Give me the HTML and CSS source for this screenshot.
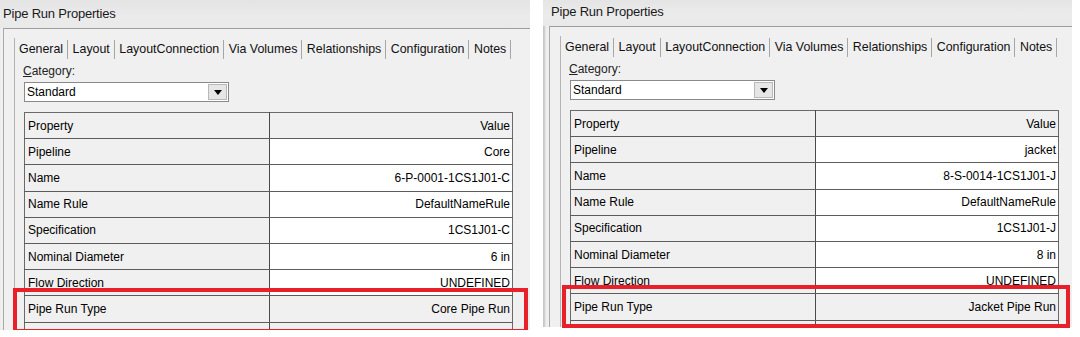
FILE: index.html
```html
<!DOCTYPE html>
<html lang="en">
<head>
    <meta charset="UTF-8">
    <title>Pipe Run Properties</title>
    <link rel="stylesheet" href="styles.css">
</head>
<body>

<div class="shots">

    <section class="shot shot-left">
        <div class="dialog">
            <div class="titlebar">Pipe Run Properties</div>
            <div class="frame">
                <div class="tabctl">
                    <ul class="tabs">
                        <li class="active">General</li>
                        <li>Layout</li>
                        <li>LayoutConnection</li>
                        <li>Via Volumes</li>
                        <li>Relationships</li>
                        <li>Configuration</li>
                        <li>Notes</li>
                    </ul>
                    <div class="page">
                        <div class="field-label"><u>C</u>ategory:</div>
                        <div class="combo">
                            <span class="combo-text">Standard</span>
                            <span class="combo-btn"><svg width="8" height="5" viewBox="0 0 8 5"><path d="M0 0h8L4 5z" fill="#000"/></svg></span>
                        </div>
                        <table class="grid">
                            <tr class="head"><td>Property</td><td>Value</td></tr>
                            <tr><td>Pipeline</td><td class="edit">Core</td></tr>
                            <tr><td>Name</td><td class="edit">6-P-0001-1CS1J01-C</td></tr>
                            <tr><td>Name Rule</td><td class="edit">DefaultNameRule</td></tr>
                            <tr><td>Specification</td><td class="edit">1CS1J01-C</td></tr>
                            <tr><td>Nominal Diameter</td><td class="edit">6 in</td></tr>
                            <tr><td>Flow Direction</td><td class="edit">UNDEFINED</td></tr>
                            <tr><td>Pipe Run Type</td><td>Core Pipe Run</td></tr>
                            <tr><td></td><td></td></tr>
                        </table>
                    </div>
                </div>
            </div>
        </div>
        <div class="mark"></div>
    </section>

    <section class="shot shot-right">
        <div class="dialog">
            <div class="titlebar">Pipe Run Properties</div>
            <div class="frame">
                <div class="tabctl">
                    <ul class="tabs">
                        <li class="active">General</li>
                        <li>Layout</li>
                        <li>LayoutConnection</li>
                        <li>Via Volumes</li>
                        <li>Relationships</li>
                        <li>Configuration</li>
                        <li>Notes</li>
                    </ul>
                    <div class="page">
                        <div class="field-label"><u>C</u>ategory:</div>
                        <div class="combo">
                            <span class="combo-text">Standard</span>
                            <span class="combo-btn"><svg width="8" height="5" viewBox="0 0 8 5"><path d="M0 0h8L4 5z" fill="#000"/></svg></span>
                        </div>
                        <table class="grid">
                            <tr class="head"><td>Property</td><td>Value</td></tr>
                            <tr><td>Pipeline</td><td class="edit">jacket</td></tr>
                            <tr><td>Name</td><td class="edit">8-S-0014-1CS1J01-J</td></tr>
                            <tr><td>Name Rule</td><td class="edit">DefaultNameRule</td></tr>
                            <tr><td>Specification</td><td class="edit">1CS1J01-J</td></tr>
                            <tr><td>Nominal Diameter</td><td class="edit">8 in</td></tr>
                            <tr><td>Flow Direction</td><td class="edit">UNDEFINED</td></tr>
                            <tr><td>Pipe Run Type</td><td>Jacket Pipe Run</td></tr>
                            <tr><td></td><td></td></tr>
                        </table>
                    </div>
                </div>
            </div>
        </div>
        <div class="mark"></div>
    </section>

</div>

</body>
</html>
```

FILE: styles.css
```css
body {
    margin: 0;
    background: #fff;
    font-family: "Liberation Sans", Arial, sans-serif;
    font-size: 12px;
    color: #000;
    overflow: hidden;
}

.shots {
    display: flex;
    align-items: flex-start;
}

.shot {
    position: relative;
    flex: none;
}

.shot-left {
    width: 533px;
    margin-left: -3px;
}

.shot-right {
    width: 529px;
    margin-left: 13px;
    margin-top: -2px;
}

.dialog {
    height: 330px;
    overflow: hidden;
    background: #f0f0f0;
    box-shadow: inset 3px 0 2px -1px #c4c4c4;
}

.shot-right .dialog {
    height: 329px;
}

/* barre de titre */
.titlebar {
    height: 28px;
    line-height: 27px;
    padding-left: 6px;
    font-size: 13px;
    letter-spacing: -0.2px;
    color: #1a1a1a;
    background: linear-gradient(to bottom, #e4e4e4, #ebebeb 60%, #e9e9e9);
}

.shot-right .titlebar {
    padding-left: 8px;
}

.frame {
    margin-left: 6px;
    height: 302px;
    border-top: 1px solid #9e9e9e;
    border-left: 1px solid #a9a9a9;
    background: #f0f0f0;
}

.tabctl {
    margin-left: 10px;
    margin-top: 9px;
    border-left: 1px solid #b4b4b4;
    height: 300px;
}

/* onglets */
.tabs {
    list-style: none;
    margin: 0;
    padding: 0 0 0 4px;
    height: 22px;
    display: flex;
    align-items: center;
    font-size: 12.4px;
}

.tabs li {
    padding: 0 4px 0 0;
    margin-right: 4.5px;
    border-right: 1px solid #a6a6a6;
    line-height: 19px;
    color: #111;
    white-space: nowrap;
}

.page {
    padding: 4px 0 0 8px;
}

.field-label {
    line-height: 14px;
    color: #222;
}

.combo {
    margin: 4px 0 0 1px;
    width: 203px;
    height: 18px;
    border: 1px solid #8a8a8a;
    background: #fff;
    display: flex;
    align-items: center;
    justify-content: space-between;
}

.combo-text {
    padding-left: 2px;
}

.combo-btn {
    width: 17px;
    height: 14px;
    margin-right: 1px;
    border: 1px solid #b8b8b8;
    background: #e6e6e6;
    display: flex;
    align-items: center;
    justify-content: center;
}

/* grille des propriétés */
.grid {
    margin: 10px 0 0 1px;
    width: 489px;
    border-collapse: collapse;
    border: 1px solid #6a6a6a;
    table-layout: fixed;
}

.grid td {
    height: 25.2px;
    padding: 0 3px;
    border-bottom: 1px solid #5c5c5c;
    background: #f0f0f0;
    white-space: nowrap;
    overflow: hidden;
}

.grid td:first-child {
    width: 238px;
    border-right: 1px solid #4a4a4a;
}

.grid td:last-child {
    text-align: right;
    padding-right: 2px;
}

.grid td.edit {
    background: #fff;
}

/* cadre rouge d'annotation */
.mark {
    position: absolute;
    border: 4px solid #e8202a;
    box-sizing: border-box;
}

.shot-left .mark {
    left: 16px;
    top: 288px;
    width: 515px;
    height: 45px;
}

.shot-right .mark {
    left: 19px;
    top: 287px;
    width: 508px;
    height: 43px;
}
```
